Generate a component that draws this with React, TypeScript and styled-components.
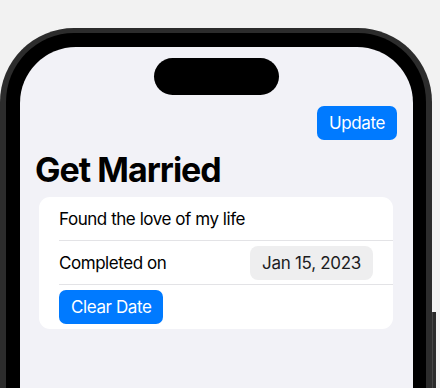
import React from "react";
import styled, { createGlobalStyle } from "styled-components";

const GlobalStyle = createGlobalStyle`
  html, body {
    margin: 0;
    padding: 0;
    height: 388px;
    overflow: hidden;
    background: #f2f2f2;
    font-family: "Inter", "Liberation Sans", sans-serif;
    -webkit-font-smoothing: antialiased;
  }
  * { box-sizing: border-box; }
`;

const Stage = styled.div`
  padding-top: 28px;
  height: 388px;
`;

const Phone = styled.div`
  position: relative;
  width: 432px;
  height: 420px;
  background: #000;
  border-style: solid;
  border-color: #2c2c2c;
  border-width: 5px 6px 0 6px;
  border-radius: 74px 74px 0 0;
  padding: 14px 13px 0 14px;
`;

const SideButton = styled.div`
  position: absolute;
  right: -10px;
  top: 279px;
  width: 4px;
  height: 120px;
  background: #2a2a2a;
  border-left: 1px solid #444;
`;

const Screen = styled.div`
  height: 100%;
  background: #f2f2f7;
  border-radius: 56px 56px 0 0;
  display: flex;
  flex-direction: column;
  overflow: hidden;
`;

const Island = styled.div`
  align-self: center;
  margin-top: 11px;
  width: 125px;
  height: 37px;
  border-radius: 19px;
  background: #000;
`;

const Toolbar = styled.div`
  display: flex;
  justify-content: flex-end;
  padding: 0 16px;
  margin-top: 11px;
`;

const FilledButton = styled.button<{ $px?: number }>`
  height: 34px;
  padding: 0 ${(p) => p.$px ?? 12}px;
  border: none;
  border-radius: 7px;
  background: #007aff;
  color: #fff;
  font-family: inherit;
  font-size: 17px;
  font-weight: 400;
  line-height: 34px;
  letter-spacing: -0.4px;
  cursor: pointer;
`;

const Title = styled.h1`
  margin: 9px 0 7px 0;
  padding-left: 15px;
  font-size: 34px;
  line-height: 41px;
  font-weight: 700;
  color: #000;
  letter-spacing: -1px;
`;

const Card = styled.div`
  margin: 0 20px 0 19px;
  background: #fff;
  border-radius: 11px;
  display: flex;
  flex-direction: column;
`;

const Row = styled.div<{ $divider?: boolean }>`
  height: 44px;
  margin-left: 20px;
  padding-right: 20px;
  display: flex;
  align-items: center;
  justify-content: space-between;
  border-bottom: ${(p) => (p.$divider ? "1px solid #e3e3e6" : "none")};
  font-size: 17px;
  color: #000;
  letter-spacing: -0.45px;
`;

const DatePill = styled.span`
  height: 34px;
  padding: 0 12px;
  border-radius: 8px;
  background: #eeeeef;
  display: inline-flex;
  align-items: center;
  font-size: 17px;
  letter-spacing: -0.3px;
  color: #1c1c1e;
`;

export default function App() {
  return (
    <>
      <GlobalStyle />
      <Stage>
        <Phone>
          <SideButton />
          <Screen>
            <Island />
            <Toolbar>
              <FilledButton $px={12}>Update</FilledButton>
            </Toolbar>
            <Title>Get Married</Title>
            <Card>
              <Row $divider>Found the love of my life</Row>
              <Row $divider>
                <span>Completed on</span>
                <DatePill>Jan 15, 2023</DatePill>
              </Row>
              <Row>
                <FilledButton $px={12}>Clear Date</FilledButton>
              </Row>
            </Card>
          </Screen>
        </Phone>
      </Stage>
    </>
  );
}
